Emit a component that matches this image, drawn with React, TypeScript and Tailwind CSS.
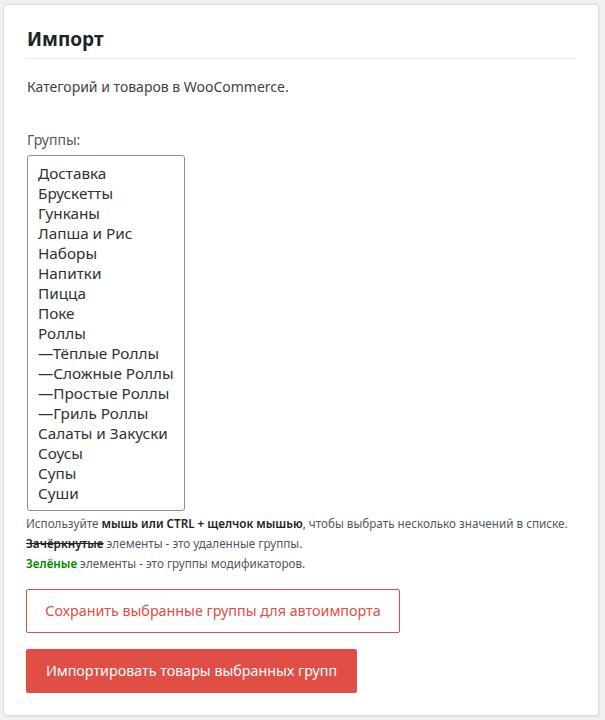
import { useState } from "react";

const groups = [
  "Доставка",
  "Брускетты",
  "Гунканы",
  "Лапша и Рис",
  "Наборы",
  "Напитки",
  "Пицца",
  "Поке",
  "Роллы",
  "—Тёплые Роллы",
  "—Сложные Роллы",
  "—Простые Роллы",
  "—Гриль Роллы",
  "Салаты и Закуски",
  "Соусы",
  "Супы",
  "Суши",
];

export default function App() {
  const [selected, setSelected] = useState<string[]>([]);

  const toggle = (g: string) =>
    setSelected((s) => (s.includes(g) ? s.filter((x) => x !== g) : [...s, g]));

  return (
    <div className="min-h-[720px] bg-[#f0f0f1] pb-[4px] pl-[3px] pr-[6px] pt-[4px] font-['Noto_Sans',sans-serif] text-[#3c434a]">
      <div className="rounded-[4px] border border-[#dcdcde] bg-white px-[22px] pb-[22px] pt-[21px] shadow-[1px_1px_1px_rgba(0,0,0,0.06)]">
        {/* Header */}
        <h2 className="border-b border-[#ececec] pb-[6px] pl-[1px] text-[19px] font-bold leading-[26px] text-[#1d2327]">
          Импорт
        </h2>

        <p className="mt-[18px] pl-[1px] text-[14px] leading-[20px] text-[#3c434a]">
          Категорий и товаров в WooCommerce.
        </p>

        {/* Groups list */}
        <label className="mt-[33px] block pl-[1px] text-[14px] leading-[20px] text-[#50575e]">
          Группы:
        </label>
        <div className="ml-[1px] mt-[5px] w-[158px] rounded-[3px] border border-[#8c8f94] px-[10px] py-[7px]">
          {groups.map((g) => (
            <div
              key={g}
              onClick={() => toggle(g)}
              className={`cursor-default whitespace-nowrap text-[15.3px] leading-[20px] ${
                selected.includes(g) ? "bg-[#2271b1] text-white" : "text-[#2c3338]"
              }`}
            >
              {g}
            </div>
          ))}
        </div>

        {/* Hints */}
        <div className="mt-[4px] space-y-[4px] text-[11.7px] leading-[16px] text-[#50575e]">
          <p>
            Используйте <b className="font-semibold text-[#1d2327]">мышь или CTRL + щелчок мышью</b>, чтобы выбрать
            несколько значений в списке.
          </p>
          <p>
            <s className="font-semibold text-[#1d2327]">Зачёркнутые</s> элементы - это удаленные группы.
          </p>
          <p>
            <b className="font-semibold text-[#008a00]">Зелёные</b> элементы - это группы модификаторов.
          </p>
        </div>

        {/* Actions */}
        <div className="mt-[18px] flex flex-col items-start gap-[16px]">
          <button className="h-[44px] w-[374px] rounded-[2px] border border-[#e04e45] bg-white text-[14.3px] text-[#e04e45]">
            Сохранить выбранные группы для автоимпорта
          </button>
          <button className="h-[44px] w-[331px] rounded-[2px] bg-[#e04e45] text-[14.3px] text-white">
            Импортировать товары выбранных групп
          </button>
        </div>
      </div>
    </div>
  );
}
